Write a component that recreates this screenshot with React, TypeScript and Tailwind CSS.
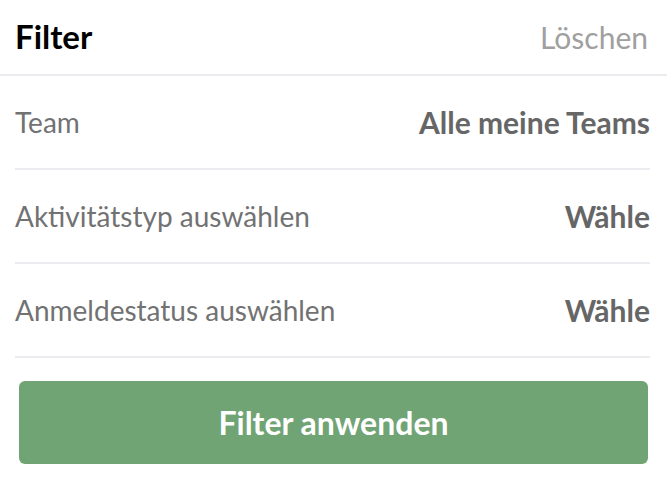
const rows = [
  { label: "Team", value: "Alle meine Teams" },
  { label: "Aktivitätstyp auswählen", value: "Wähle" },
  { label: "Anmeldestatus auswählen", value: "Wähle" },
];

export default function App() {
  return (
    <div className="w-[667px] h-[481px] bg-white overflow-hidden font-['Lato',sans-serif]">
      <div className="flex items-center justify-between h-[76px] pl-[15px] pr-[19px] border-b-2 border-[#ececf0]">
        <h1 className="text-[33px] font-bold text-black">Filter</h1>
        <button className="text-[30px] text-[#a0a0a0]">Löschen</button>
      </div>
      <div className="ml-[15px] mr-[17px]">
        {rows.map((row) => (
          <div
            key={row.label}
            className="flex items-center justify-between h-[94px] border-b-2 border-[#ececf0]"
          >
            <span className="text-[28px] text-[#727272]">{row.label}</span>
            <span className="text-[30px] font-bold text-[#666]">{row.value}</span>
          </div>
        ))}
      </div>
      <div className="px-[19px] pt-[23px]">
        <button className="w-full h-[83px] rounded-[6px] bg-[#71a474] text-white text-[32px] font-bold">
          Filter anwenden
        </button>
      </div>
    </div>
  );
}
